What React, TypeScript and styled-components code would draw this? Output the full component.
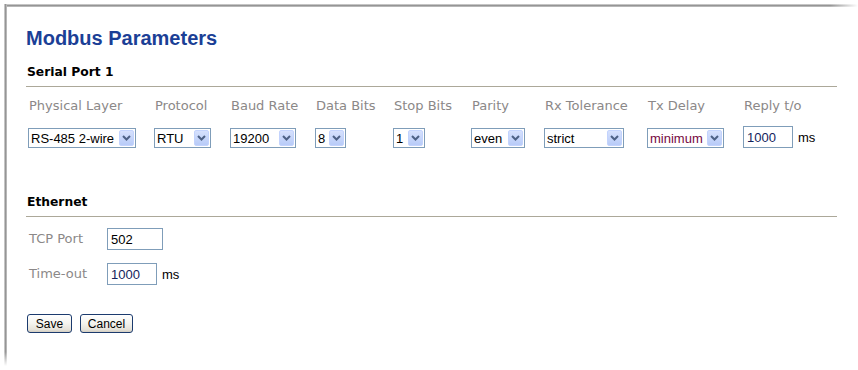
import React from "react";
import styled, { createGlobalStyle } from "styled-components";

const Global = createGlobalStyle`
  html, body { margin: 0; padding: 0; background: #fff; }
  body { width: 858px; height: 370px; overflow: hidden; }
`;

const Frame = styled.div`
  position: relative;
  margin: 4px 0 0 4px;
  height: 362px;
  box-sizing: border-box;
  padding: 22px 0 0 22px;
  background: #fff;
  &::before {
    content: "";
    position: absolute;
    left: 0;
    top: 0;
    right: 0;
    height: 3px;
    background: linear-gradient(to right, rgba(255,255,255,0) calc(100% - 28px), #fff 100%),
      linear-gradient(to bottom, #dcdcdc, #8e8e8e 55%, #cfcfcf);
  }
  &::after {
    content: "";
    position: absolute;
    left: 0;
    top: 0;
    bottom: 0;
    width: 3px;
    background: linear-gradient(to bottom, rgba(255,255,255,0) calc(100% - 14px), #fff 100%),
      linear-gradient(to right, #dcdcdc, #8e8e8e 55%, #cfcfcf);
  }
`;

const Content = styled.div`
  width: 811px;
`;

const Title = styled.h1`
  margin: 0;
  font-family: "Liberation Sans", Arial, sans-serif;
  font-weight: bold;
  font-size: 20px;
  line-height: 24px;
  color: #1b3f96;
`;

const SectionHeading = styled.h2<{ $top: number }>`
  margin: ${(p) => p.$top}px 0 0 0;
  padding-left: 1px;
  font-family: "DejaVu Sans", Verdana, sans-serif;
  font-weight: bold;
  font-size: 12.3px;
  line-height: 16px;
  color: #000;
  padding-bottom: 6px;
  border-bottom: 1px solid #aca899;
`;

const ParamGrid = styled.div`
  display: grid;
  grid-template-columns: 126px 76px 85px 78px 78px 73px 103px 96px auto;
  grid-template-rows: 16px 22px;
  row-gap: 12px;
  margin: 11px 0 0 2px;
  align-items: start;
`;

const Label = styled.div`
  font-family: "DejaVu Sans", Verdana, sans-serif;
  font-size: 13px;
  line-height: 16px;
  color: #8b8888;
  padding-left: 1px;
  white-space: nowrap;
`;

const SelectBox = styled.div<{ $w: number; $color?: string }>`
  display: inline-flex;
  align-items: center;
  justify-content: space-between;
  box-sizing: border-box;
  width: ${(p) => p.$w}px;
  height: 20px;
  margin-top: 2px;
  border: 1px solid #7f9db9;
  background: #fff;
  font-family: "Liberation Sans", Arial, sans-serif;
  font-size: 13px;
  color: ${(p) => p.$color || "#000"};
  padding-left: 2px;
  white-space: nowrap;
  overflow: hidden;
`;

const ArrowButton = styled.span`
  flex: none;
  display: flex;
  align-items: center;
  justify-content: center;
  box-sizing: border-box;
  width: 15px;
  height: 16px;
  margin-right: 1px;
  border: 1px solid #c3d3fd;
  border-radius: 2px;
  background: linear-gradient(to bottom, #d6e1fd, #b8cbf8);
`;

const TextField = styled.div<{ $w: number; $color?: string }>`
  display: inline-flex;
  align-items: center;
  box-sizing: border-box;
  width: ${(p) => p.$w}px;
  height: 22px;
  border: 1px solid #7f9db9;
  background: #fff;
  padding-left: 3px;
  font-family: "Liberation Sans", Arial, sans-serif;
  font-size: 13px;
  color: ${(p) => p.$color || "#000"};
`;

const FieldWithUnit = styled.div`
  display: flex;
  align-items: center;
  gap: 5px;
`;

const Unit = styled.span`
  font-family: "Liberation Sans", Arial, sans-serif;
  font-size: 13px;
  color: #000;
`;

const EthGrid = styled.div`
  display: grid;
  grid-template-columns: 79px auto;
  row-gap: 13px;
  margin: 11px 0 0 2px;
  align-items: center;
`;

const Buttons = styled.div`
  display: flex;
  gap: 8px;
  margin: 29px 0 0 1px;
`;

const Button = styled.button<{ $w: number }>`
  box-sizing: border-box;
  width: ${(p) => p.$w}px;
  height: 19px;
  padding: 0;
  border: 1px solid #1c3b6e;
  border-radius: 3px;
  background: linear-gradient(to bottom, #ffffff 0%, #f4f3ee 50%, #e6e3da 85%, #d3cec2 100%);
  font-family: "Liberation Sans", Arial, sans-serif;
  font-size: 12px;
  color: #000;
`;

const Chevron = () => (
  <svg width="9" height="6" viewBox="0 0 9 6">
    <path d="M1 1 L4.5 4.5 L8 1" fill="none" stroke="#4d6185" strokeWidth="2" />
  </svg>
);

const Select = ({ w, value, color }: { w: number; value: string; color?: string }) => (
  <SelectBox $w={w} $color={color}>
    <span>{value}</span>
    <ArrowButton>
      <Chevron />
    </ArrowButton>
  </SelectBox>
);

const labels = [
  "Physical Layer",
  "Protocol",
  "Baud Rate",
  "Data Bits",
  "Stop Bits",
  "Parity",
  "Rx Tolerance",
  "Tx Delay",
  "Reply t/o",
];

const selects: { w: number; value: string; color?: string }[] = [
  { w: 108, value: "RS-485 2-wire" },
  { w: 57, value: "RTU" },
  { w: 66, value: "19200" },
  { w: 31, value: "8" },
  { w: 32, value: "1" },
  { w: 54, value: "even" },
  { w: 80, value: "strict" },
  { w: 77, value: "minimum", color: "#76093e" },
];

export default function App() {
  return (
    <>
      <Global />
      <Frame>
        <Content>
          <Title>Modbus Parameters</Title>
          <SectionHeading $top={14}>Serial Port 1</SectionHeading>
          <ParamGrid>
            {labels.map((l) => (
              <Label key={l}>{l}</Label>
            ))}
            {selects.map((s) => (
              <Select key={s.value} w={s.w} value={s.value} color={s.color} />
            ))}
            <FieldWithUnit>
              <TextField $w={50} $color="#14235c">1000</TextField>
              <Unit>ms</Unit>
            </FieldWithUnit>
          </ParamGrid>
          <SectionHeading $top={46}>Ethernet</SectionHeading>
          <EthGrid>
            <Label>TCP Port</Label>
            <TextField $w={56}>502</TextField>
            <Label>Time-out</Label>
            <FieldWithUnit>
              <TextField $w={50} $color="#14235c">1000</TextField>
              <Unit>ms</Unit>
            </FieldWithUnit>
          </EthGrid>
          <Buttons>
            <Button $w={45}>Save</Button>
            <Button $w={53}>Cancel</Button>
          </Buttons>
        </Content>
      </Frame>
    </>
  );
}
